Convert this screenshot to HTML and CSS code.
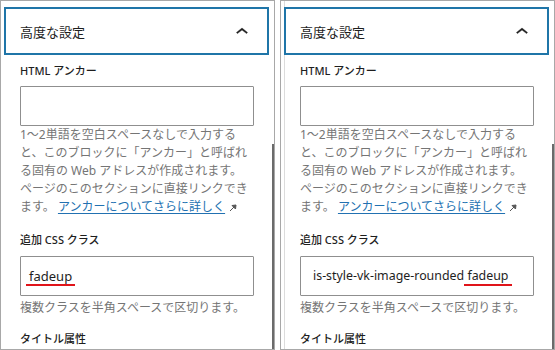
FILE: index.html
```html
<!DOCTYPE html>
<html lang="ja">
<head>
    <meta charset="UTF-8">
    <meta name="viewport" content="width=device-width, initial-scale=1.0">
    <title>高度な設定</title>
    <link rel="stylesheet" href="styles.css">
</head>
<body>

<div class="compare">
    <section class="panel">
        <div class="panel-head">
            <h2>高度な設定</h2>
            <svg class="chevron" viewBox="0 0 24 24" width="24" height="24"><path d="M6.5 12.4L12 8l5.5 4.4-.9 1.2L12 10l-4.6 3.6-1-1.2z"/></svg>
        </div>
        <div class="panel-body">
            <label class="field-label">HTML アンカー</label>
            <div class="field"></div>
            <p class="help">1〜2単語を空白スペースなしで入力する<br>と、このブロックに「アンカー」と呼ばれ<br>る固有の Web アドレスが作成されます。<br>ページのこのセクションに直接リンクでき<br>ます。 <a href="#">アンカーについてさらに詳しく</a><svg class="ext" viewBox="0 0 8 8" width="8" height="8"><path d="M1 7L6 2"/><polygon points="3,1.5 7,1 6.5,5"/></svg></p>

            <label class="field-label label-css">追加 CSS クラス</label>
            <div class="field field-css"><span class="mark">fadeup</span></div>
            <p class="help help-short">複数クラスを半角スペースで区切ります。</p>

            <label class="field-label label-title">タイトル属性</label>
        </div>
        <span class="scrollbar"></span>
    </section>

    <section class="panel panel-right">
        <div class="panel-head">
            <h2>高度な設定</h2>
            <svg class="chevron" viewBox="0 0 24 24" width="24" height="24"><path d="M6.5 12.4L12 8l5.5 4.4-.9 1.2L12 10l-4.6 3.6-1-1.2z"/></svg>
        </div>
        <div class="panel-body">
            <label class="field-label">HTML アンカー</label>
            <div class="field"></div>
            <p class="help">1〜2単語を空白スペースなしで入力する<br>と、このブロックに「アンカー」と呼ばれ<br>る固有の Web アドレスが作成されます。<br>ページのこのセクションに直接リンクでき<br>ます。 <a href="#">アンカーについてさらに詳しく</a><svg class="ext" viewBox="0 0 8 8" width="8" height="8"><path d="M1 7L6 2"/><polygon points="3,1.5 7,1 6.5,5"/></svg></p>

            <label class="field-label label-css">追加 CSS クラス</label>
            <div class="field field-css field-long">is-style-vk-image-rounded <span class="mark">fadeup</span></div>
            <p class="help help-short">複数クラスを半角スペースで区切ります。</p>

            <label class="field-label label-title">タイトル属性</label>
        </div>
        <span class="scrollbar"></span>
    </section>
</div>

</body>
</html>
```

FILE: styles.css
```css
* {
    margin: 0;
    padding: 0;
    box-sizing: border-box;
}

body {
    font-family: "Noto Sans", "Noto Sans CJK JP", sans-serif;
    background-color: #fff;
    color: #1e1e1e;
}

.compare {
    display: flex;
    gap: 5px;
    width: 555px;
    height: 350px;
}

.panel {
    position: relative;
    width: 275px;
    height: 350px;
    border: 1px solid #a8a8a8;
    padding-top: 6px;
    overflow: hidden;
}

.panel-right {
    box-shadow: inset 3px 0 0 #fff, inset 4px 0 0 #dcdcdc;
}

.panel-head {
    display: flex;
    align-items: center;
    justify-content: space-between;
    height: 48px;
    margin: 0 5px 0 3px;
    padding: 2px 13px 0 14px;
    border: 2px solid #1f75a8;
}

.panel-head h2 {
    font-size: 13px;
    font-weight: 400;
    line-height: 18px;
}

.chevron {
    fill: #1e1e1e;
    stroke: #1e1e1e;
    stroke-width: 0.4;
}

.panel-body {
    padding: 0 20px 0 19px;
}

.field-label {
    display: block;
    margin-top: 8px;
    margin-bottom: 7px;
    font-size: 11px;
    font-weight: 500;
    line-height: 16px;
}

.label-css {
    margin-top: 16px;
    margin-bottom: 8px;
}

.label-title {
    margin-top: 14px;
}

.field {
    width: 234px;
    height: 40px;
    border: 1px solid #8f8f8f;
    border-radius: 1px;
    padding: 0 8px;
    font-size: 13px;
    line-height: 38px;
    white-space: nowrap;
}

.field-long {
    padding-left: 12px;
    font-size: 12.4px;
}

.mark {
    display: inline-block;
    line-height: 16px;
    padding: 0 3px 0;
    margin: 0 -3px;
    border-bottom: 2px solid #e0141a;
}

.help {
    font-size: 12px;
    line-height: 18px;
    color: #757575;
    white-space: nowrap;
}

.help-short {
    margin-top: 3px;
}

.help a {
    color: #2271b1;
    text-decoration: underline;
    text-underline-offset: 2px;
}

.ext {
    margin-left: 4px;
    vertical-align: -1px;
    stroke: #555;
    fill: #555;
    stroke-width: 1;
}

.scrollbar {
    position: absolute;
    right: 0;
    top: 143px;
    bottom: 0;
    width: 2px;
    background-color: #6b6b6b;
}
```
